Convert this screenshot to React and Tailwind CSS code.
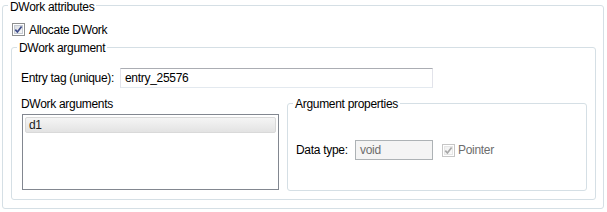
function Group({ title, className, titleClass, children }) {
  return (
    <div className={`border border-[#d5dfe5] rounded-[3px] ${className}`}>
      <div className={`ml-[5px] px-[2px] bg-white w-fit leading-[14px] ${titleClass}`}>{title}</div>
      {children}
    </div>
  );
}

function CheckBox({ disabled }) {
  const frame = disabled ? "#c6c6c6" : "#8e8f8f";
  const inner = disabled ? "#e6e6e6" : "#c5cad2";
  const mark = disabled ? "#a8a8a8" : "#3f4d8b";
  return (
    <svg width="13" height="13" viewBox="0 0 13 13" className="shrink-0">
      <defs>
        <linearGradient id={disabled ? "cbd" : "cbe"} x1="0" y1="0" x2="1" y2="1">
          <stop offset="0" stopColor={disabled ? "#f0f0f0" : "#dadde2"} />
          <stop offset="1" stopColor={disabled ? "#fbfbfb" : "#f8f8f8"} />
        </linearGradient>
      </defs>
      <rect x="0.5" y="0.5" width="12" height="12" fill="#fff" stroke={frame} />
      <rect x="2.5" y="2.5" width="8" height="8" fill={`url(#${disabled ? "cbd" : "cbe"})`} stroke={inner} />
      <path d="M3.3 6.6 L5.4 9 L9.6 3.4" fill="none" stroke={mark} strokeWidth="1.7" />
    </svg>
  );
}

export default function App() {
  return (
    <div className="w-[607px] h-[212px] bg-white text-[12px] tracking-[-0.3px] text-[#000] font-['Liberation_Sans',sans-serif] pt-[5px] pl-[2px]">
      <Group title="DWork attributes" className="w-[602px] h-[204px]" titleClass="-mt-[6px]">
        <div className="mt-[9px] pl-[9px] flex items-center h-[13px] gap-[4px]">
          <CheckBox />
          <span className="leading-[14px]">Allocate DWork</span>
        </div>

        <Group title="DWork argument" className="ml-[8px] mt-[11px] w-[585px] h-[153px]" titleClass="-mt-[7px]">
          <div className="mt-[13px] pl-[9px] flex items-center h-[20px]">
            <span className="w-[99px] leading-[14px]">Entry tag (unique):</span>
            <div className="w-[313px] h-[20px] border border-[#e2e3ea] border-t-[#abadb3] border-b-[#e3e9ef] flex items-center pl-[4px] leading-[14px]">
              entry_25576
            </div>
          </div>

          <div className="mt-[9px] pl-[9px] flex items-start">
            <div className="flex flex-col">
              <span className="leading-[14px]">DWork arguments</span>
              <div className="mt-[3px] ml-[1px] w-[257px] h-[76px] border border-[#828790] p-[2px]">
                <div className="h-[16px] rounded-[2px] border border-[#d9d9d9] bg-gradient-to-b from-[#f5f5f5] to-[#e3e3e3] flex items-center pl-[3px] leading-[14px] text-[#1a1a1a]">
                  d1
                </div>
              </div>
            </div>

            <Group title="Argument properties" className="ml-[8px] mt-[6px] w-[300px] h-[88px]" titleClass="-mt-[7px]">
              <div className="mt-[29px] pl-[8px] flex items-center h-[20px]">
                <span className="w-[59px] leading-[14px]">Data type:</span>
                <div className="w-[78px] h-[20px] border border-[#adb2b5] bg-[#f4f4f4] flex items-center pl-[4px] leading-[14px] text-[#6d6d6d]">
                  void
                </div>
                <div className="ml-[9px] flex items-center gap-[3px]">
                  <CheckBox disabled />
                  <span className="leading-[14px] text-[#6d6d6d]">Pointer</span>
                </div>
              </div>
            </Group>
          </div>
        </Group>
      </Group>
    </div>
  );
}
